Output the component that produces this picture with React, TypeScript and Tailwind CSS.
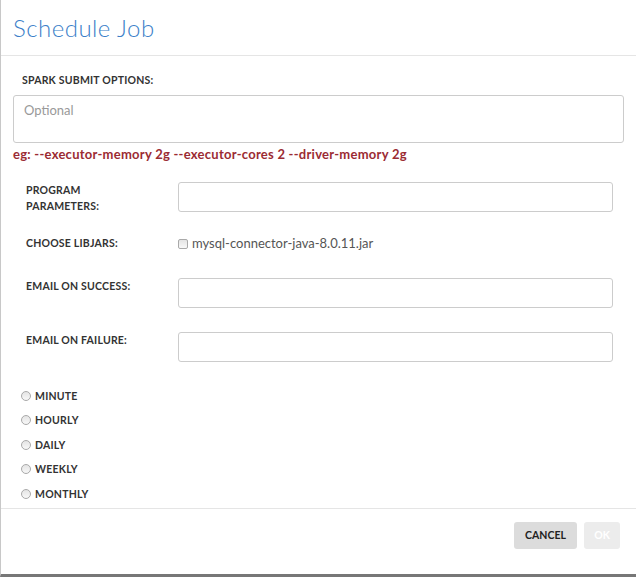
import React from 'react'

const labelCls =
  'text-[10.5px] font-bold uppercase tracking-[0.02em] text-[#333] leading-4'

const Radio = ({ label }: { label: string }) => (
  <label className="flex h-[24.5px] items-center gap-[4px]">
    <span className="h-[10px] w-[10px] rounded-full border border-[#a9a9a9] bg-gradient-to-b from-[#e4e4e4] to-[#f8f8f8]" />
    <span className={labelCls}>{label}</span>
  </label>
)

const TextInput = () => (
  <div className="h-[30px] w-[435px] rounded-[3px] border border-[#ccc] bg-white" />
)

export default function App() {
  const schedules = ['Minute', 'Hourly', 'Daily', 'Weekly', 'Monthly']

  return (
    <div
      className="flex h-[577px] w-[636px] flex-col border-b-[3px] border-l border-b-[#777] border-l-[#c8c8c8] bg-white"
      style={{ fontFamily: 'Lato, "Open Sans", sans-serif' }}
    >
      <div className="flex h-[56px] items-center border-b border-[#e5e5e5] px-[12px]">
        <h1 className="text-[24px] font-light tracking-[0.02em] text-[#3c7fc9]">Schedule Job</h1>
      </div>

      <div className="flex flex-1 flex-col px-[12px]">
        <div className={`${labelCls} mt-[16px] pl-[9px]`}>Spark Submit Options:</div>
        <div className="mt-[7px] h-[48px] w-[611px] rounded-[3px] border border-[#ccc] px-[10px] pt-[5px] text-[13px] text-[#999]">
          Optional
        </div>
        <div className="mt-[3px] text-[13px] font-bold leading-4 tracking-[0.02em] text-[#9b2b33]">
          eg: --executor-memory 2g --executor-cores 2 --driver-memory 2g
        </div>

        <div className="mt-[20px] flex pl-[13px]">
          <div className={`${labelCls} w-[152px]`}>
            Program
            <br />
            Parameters:
          </div>
          <TextInput />
        </div>

        <div className="mt-[18px] flex items-center pl-[13px]">
          <div className={`${labelCls} w-[152px]`}>Choose Libjars:</div>
          <div className="flex items-center gap-[4px] pt-[2px]">
            <span className="h-[10px] w-[10px] rounded-[2px] border border-[#a9a9a9] bg-gradient-to-b from-[#e4e4e4] to-[#f8f8f8]" />
            <span className="text-[13px] text-[#555]">mysql-connector-java-8.0.11.jar</span>
          </div>
        </div>

        <div className="mt-[24px] flex pl-[13px]">
          <div className={`${labelCls} w-[152px]`}>Email on Success:</div>
          <TextInput />
        </div>

        <div className="mt-[24px] flex pl-[13px]">
          <div className={`${labelCls} w-[152px]`}>Email on Failure:</div>
          <TextInput />
        </div>

        <div className="mt-[22px] flex flex-col pl-[8px]">
          {schedules.map((s) => (
            <Radio key={s} label={s} />
          ))}
        </div>
      </div>

      <div className="flex h-[66px] justify-end gap-[7px] border-t border-[#e5e5e5] pr-[16px] pt-[13px]">
        <button className="h-[27px] w-[63px] rounded-[3px] bg-[#dcdcdc] text-[10.5px] font-bold text-[#222]">
          CANCEL
        </button>
        <button className="h-[27px] w-[36px] rounded-[3px] bg-[#ececec] text-[10.5px] font-bold text-white">
          OK
        </button>
      </div>
    </div>
  )
}
